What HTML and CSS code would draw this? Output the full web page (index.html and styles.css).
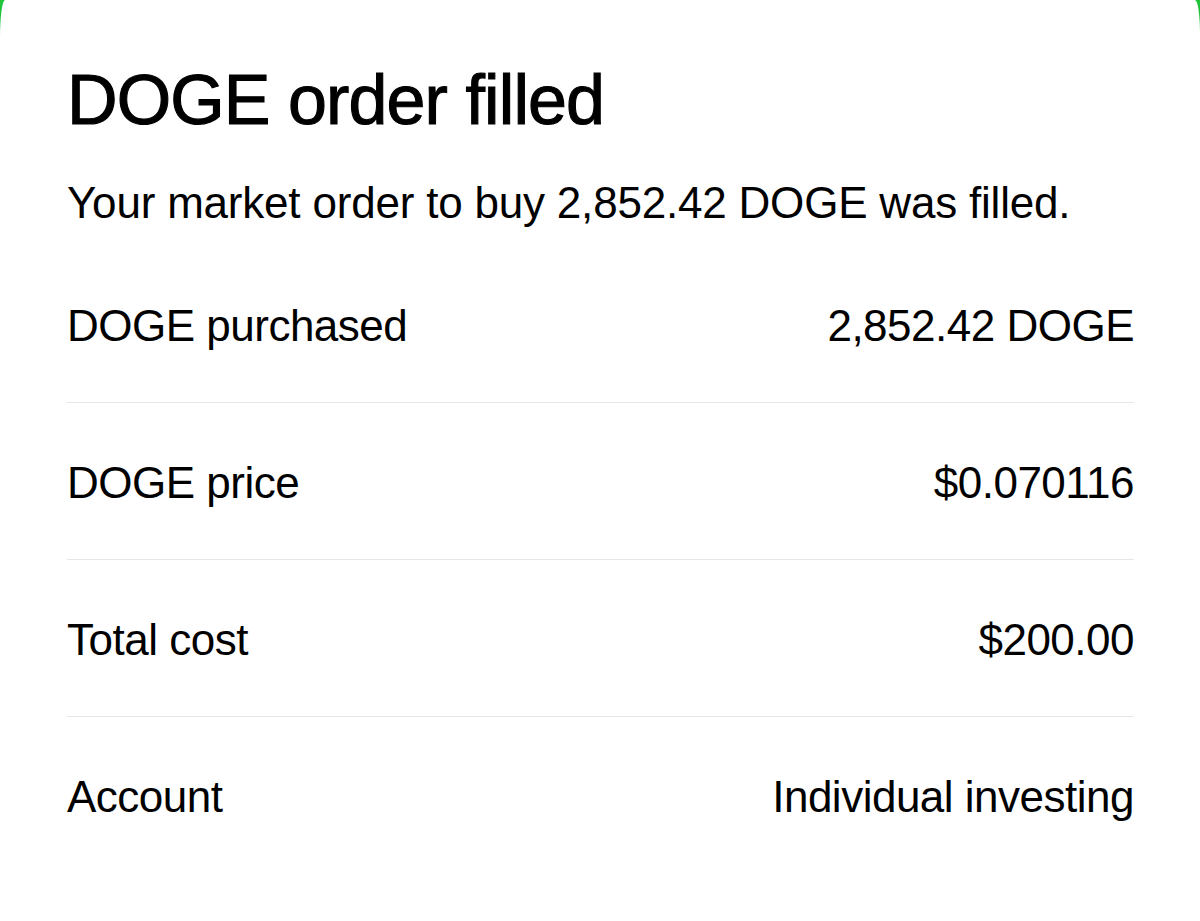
FILE: index.html
```html
<!DOCTYPE html>
<html lang="en">
<head>
    <meta charset="UTF-8">
    <meta name="viewport" content="width=device-width, initial-scale=1.0">
    <title>DOGE order filled</title>
    <link rel="stylesheet" href="styles.css">
</head>
<body>

<div class="sheet">
    <h1 class="title">DOGE order filled</h1>
    <p class="summary">Your market order to buy 2,852.42 DOGE was filled.</p>

    <ul class="details">
        <li class="row">
            <span class="label">DOGE purchased</span>
            <span class="value">2,852.42 DOGE</span>
        </li>
        <li class="row">
            <span class="label">DOGE price</span>
            <span class="value">$0.070116</span>
        </li>
        <li class="row">
            <span class="label">Total cost</span>
            <span class="value">$200.00</span>
        </li>
        <li class="row">
            <span class="label">Account</span>
            <span class="value">Individual investing</span>
        </li>
    </ul>
</div>

</body>
</html>
```

FILE: styles.css
```css
html, body {
    height: 100%;
}

body {
    margin: 0;
    padding: 0;
    background-color: #1fc43a;
    font-family: "Liberation Sans", Arial, sans-serif;
    color: #000;
}

.sheet {
    box-sizing: border-box;
    min-height: 100%;
    background-color: #fff;
    padding: 60px 66px 0 67px;
    border-radius: 5px 5px 0 0 / 38px 34px 0 0;
}

/* medium weight: regular face with a thin stroke on top */
.title {
    margin: 0;
    font-size: 70px;
    line-height: 80px;
    font-weight: 400;
    letter-spacing: -0.9px;
    -webkit-text-stroke: 1.1px #000;
}

.summary {
    margin: 37px 0 0;
    font-size: 44px;
    line-height: 52px;
    letter-spacing: -0.2px;
}

.details {
    list-style: none;
    margin: 17px 0 0;
    padding: 0;
}

.row {
    display: flex;
    justify-content: space-between;
    padding: 54px 0 50px;
    border-bottom: 1px solid #e6e6e6;
    font-size: 44px;
    line-height: 52px;
    letter-spacing: -0.5px;
}

.row:last-child {
    border-bottom: none;
}
```
